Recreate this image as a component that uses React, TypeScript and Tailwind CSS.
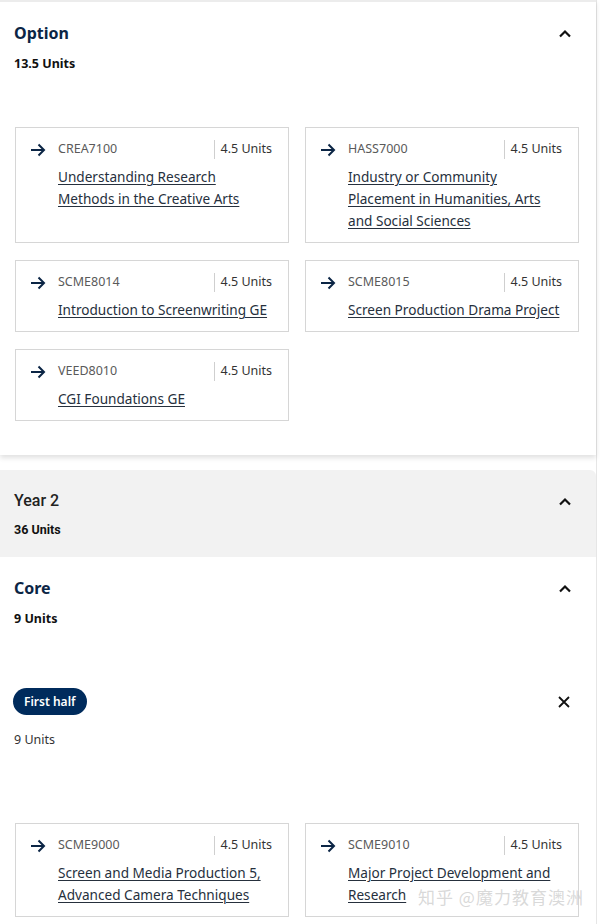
import React from "react";

type Course = { code: string; title: string };

const optionCourses: Course[] = [
  { code: "CREA7100", title: "Understanding Research Methods in the Creative Arts" },
  { code: "HASS7000", title: "Industry or Community Placement in Humanities, Arts and Social Sciences" },
  { code: "SCME8014", title: "Introduction to Screenwriting GE" },
  { code: "SCME8015", title: "Screen Production Drama Project" },
  { code: "VEED8010", title: "CGI Foundations GE" },
];

const coreCourses: Course[] = [
  { code: "SCME9000", title: "Screen and Media Production 5, Advanced Camera Techniques" },
  { code: "SCME9010", title: "Major Project Development and Research" },
];

const Chevron = () => (
  <svg width="14" height="9" viewBox="0 0 14 9" fill="none" className="mr-[10px]">
    <path d="M2 7.5 L7 2.5 L12 7.5" stroke="#111" strokeWidth="2.2" />
  </svg>
);

const Arrow = () => (
  <svg width="16" height="14" viewBox="0 0 16 14" fill="none" className="mt-[2px] shrink-0">
    <path d="M1 7 H14 M8.5 1.5 L14 7 L8.5 12.5" stroke="#0b2545" strokeWidth="2" />
  </svg>
);

const CourseCard = ({ course }: { course: Course }) => (
  <div className="border border-[#d6d6d6] bg-white pl-[14px] pr-[14px] pt-[13px] pb-[10px] flex gap-[12px]">
    <Arrow />
    <div className="flex-1 flex flex-col gap-[9px]">
      <div className="flex items-center justify-between h-[16px] pr-[2px]">
        <span className="text-[12.5px] text-[#5a5a5a]">{course.code}</span>
        <span className="border-l border-[#cfcfcf] pl-[6px] h-[19px] flex items-center text-[12.5px] text-[#333]">
          4.5 Units
        </span>
      </div>
      <a href="#" className="text-[13.6px] leading-[22px] text-[#26303d] underline underline-offset-2 decoration-1">
        {course.title}
      </a>
    </div>
  </div>
);

const App = () => {
  return (
    <main className="min-h-screen bg-white font-['Noto_Sans','Open_Sans',sans-serif] relative overflow-hidden">
      <div className="w-[597px] border-r border-[#e6e6e6] min-h-screen">
        {/* Option */}
        <section className="border-t-2 border-[#ececec] bg-white shadow-[0_3px_5px_rgba(0,0,0,0.12)] pb-[34px]">
          <div className="px-[14px] pt-[20px] flex items-center justify-between">
            <h2 className="text-[16px] leading-[22px] font-bold text-[#0b2545]">Option</h2>
            <Chevron />
          </div>
          <p className="px-[14px] mt-[11px] text-[12.5px] leading-[18px] font-bold text-[#111]">13.5 Units</p>
          <div className="grid grid-cols-2 gap-x-4 gap-y-[17px] pl-[15px] pr-[17px] mt-[54px]">
            {optionCourses.map((c) => (
              <CourseCard key={c.code} course={c} />
            ))}
          </div>
        </section>

        {/* Year 2 */}
        <section className="mt-[15px] bg-[#f2f2f2] rounded-tr-md px-[14px] pt-[20px] pb-[18px] font-['Roboto',sans-serif]">
          <div className="flex items-center justify-between">
            <h2 className="text-[16px] leading-[22px] font-medium text-[#222]">Year 2</h2>
            <Chevron />
          </div>
          <p className="mt-[9px] text-[12.5px] leading-[18px] font-bold text-[#111]">36 Units</p>
        </section>

        {/* Core */}
        <section className="pt-[20px] pb-[6px]">
          <div className="px-[14px] flex items-center justify-between">
            <h2 className="text-[16px] leading-[22px] font-bold text-[#0b2545]">Core</h2>
            <Chevron />
          </div>
          <p className="px-[14px] mt-[11px] text-[12.5px] leading-[18px] font-bold text-[#111]">9 Units</p>

          <div className="pl-[13px] pr-[14px] mt-[60px] flex items-center justify-between">
            <span className="h-[27px] px-[11px] rounded-full bg-[#002b5c] text-white text-[12px] font-semibold flex items-center">
              First half
            </span>
            <svg width="12" height="12" viewBox="0 0 12 12" className="mr-[12px]">
              <path d="M1 1 L11 11 M11 1 L1 11" stroke="#111" strokeWidth="1.8" />
            </svg>
          </div>
          <p className="px-[14px] mt-[16px] text-[12.5px] leading-[18px] text-[#333]">9 Units</p>

          <div className="grid grid-cols-2 gap-x-4 gap-y-[17px] pl-[15px] pr-[17px] mt-[74px]">
            {coreCourses.map((c) => (
              <CourseCard key={c.code} course={c} />
            ))}
          </div>
        </section>
      </div>

      {/* watermark */}
      <span className="absolute left-[418px] top-[884px] text-[17px] text-[#cfcfcf]/80 font-['Noto_Sans_CJK_SC',sans-serif] tracking-[1px]">
        知乎 @魔力教育澳洲
      </span>
    </main>
  );
};

export default App;
